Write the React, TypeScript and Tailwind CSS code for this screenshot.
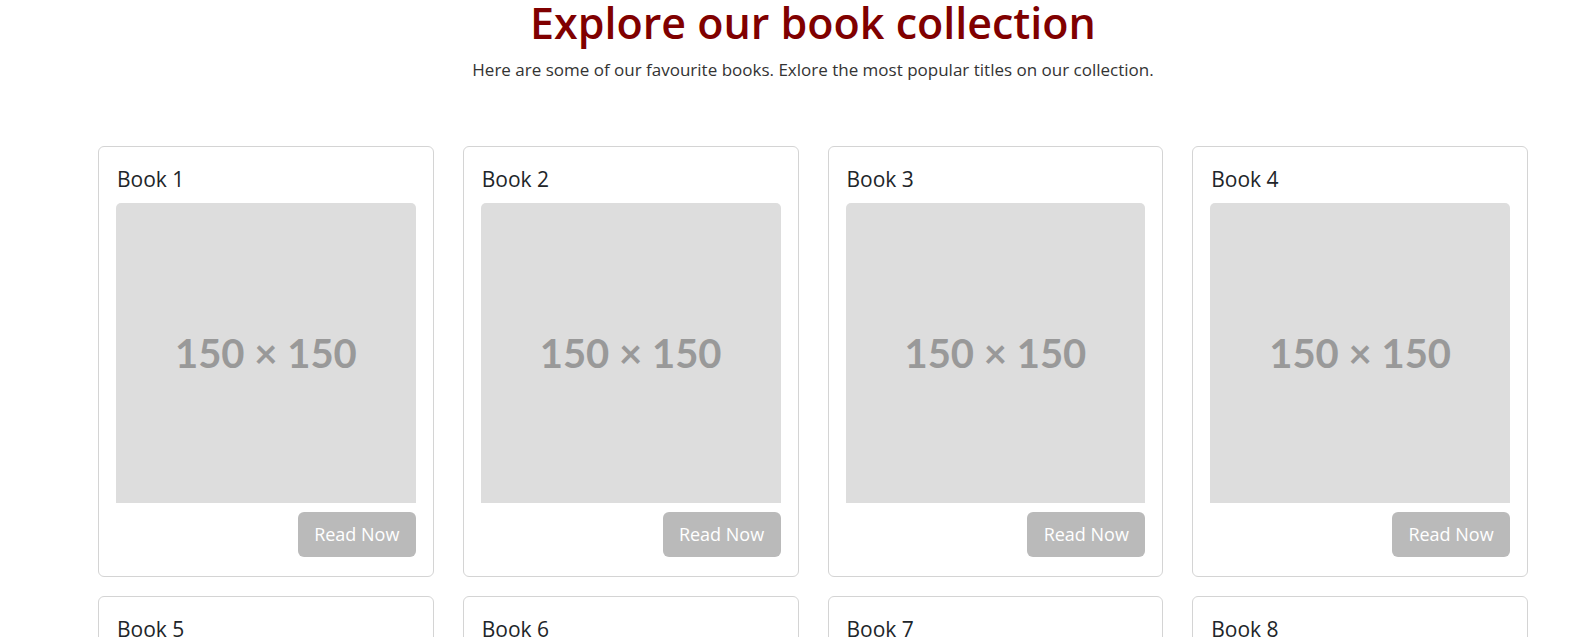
import React from "react";

const books = [1, 2, 3, 4, 5, 6, 7, 8].map((n) => ({ id: n, title: `Book ${n}` }));

function BookCard({ title }: { title: string }) {
  return (
    <div className="flex flex-col border border-[#d4d4d4] rounded-[6px] bg-white p-[17px] pb-[19px]">
      <h5 className="text-[21px] leading-[24px] text-[#212529] mt-[3px] mb-[12px] ml-[1px] font-normal">{title}</h5>
      <div className="h-[300px] bg-[#dddddd] rounded-t-[5px] flex items-center justify-center">
        <span className="font-['Lato',sans-serif] font-bold text-[40px] text-[#999999]">150 × 150</span>
      </div>
      <div className="flex justify-end mt-[9px]">
        <button className="w-[118px] h-[45px] rounded-[6px] bg-[#bababa] text-white text-[18px]">Read Now</button>
      </div>
    </div>
  );
}

export default function App() {
  return (
    <div className="min-h-screen bg-white font-['Open_Sans',sans-serif] pl-[98px] pr-[47px]">
      <h1 className="text-center text-[43px] leading-[46px] text-[#800000] font-semibold">
        Explore our book collection
      </h1>
      <p className="text-center text-[17px] text-[#333333] mt-[11px]">
        Here are some of our favourite books. Exlore the most popular titles on our collection.
      </p>
      <div className="grid grid-cols-4 gap-x-[29px] gap-y-[19px] mt-[63px]">
        {books.map((b) => (
          <BookCard key={b.id} title={b.title} />
        ))}
      </div>
    </div>
  );
}
